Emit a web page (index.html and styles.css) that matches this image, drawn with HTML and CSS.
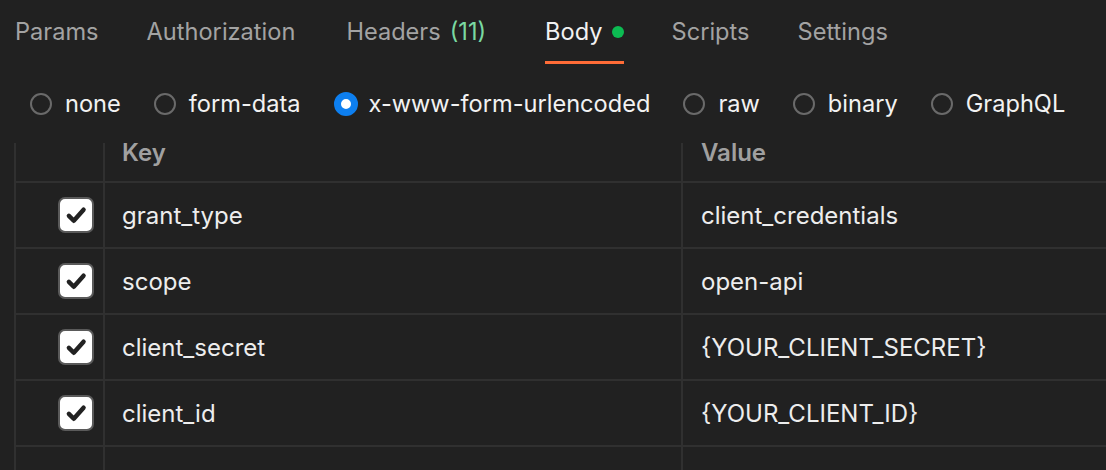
FILE: index.html
```html
<!DOCTYPE html>
<html>
<head>
<meta charset="utf-8">
<link rel="stylesheet" href="styles.css">
</head>
<body>
<div class="tabs">
  <div class="tab">Params</div>
  <div class="tab">Authorization</div>
  <div class="tab headers">Headers <span class="count">(11)</span></div>
  <div class="tab active">Body <span class="dot"></span></div>
  <div class="tab">Scripts</div>
  <div class="tab">Settings</div>
</div>
<div class="modes">
  <label class="mode"><span class="radio"></span>none</label>
  <label class="mode"><span class="radio"></span>form-data</label>
  <label class="mode"><span class="radio on"></span>x-www-form-urlencoded</label>
  <label class="mode"><span class="radio"></span>raw</label>
  <label class="mode"><span class="radio"></span>binary</label>
  <label class="mode"><span class="radio"></span>GraphQL</label>
</div>
<div class="table-wrap">
  <div class="table">
    <div class="row head">
      <div class="cell check"></div>
      <div class="cell key">Key</div>
      <div class="cell val">Value</div>
    </div>
    <div class="row">
      <div class="cell check"><span class="box"><svg viewBox="0 0 36 36"><path d="M10 19 L15.5 24.5 L26.5 12"/></svg></span></div>
      <div class="cell key">grant_type</div>
      <div class="cell val">client_credentials</div>
    </div>
    <div class="row">
      <div class="cell check"><span class="box"><svg viewBox="0 0 36 36"><path d="M10 19 L15.5 24.5 L26.5 12"/></svg></span></div>
      <div class="cell key">scope</div>
      <div class="cell val">open-api</div>
    </div>
    <div class="row">
      <div class="cell check"><span class="box"><svg viewBox="0 0 36 36"><path d="M10 19 L15.5 24.5 L26.5 12"/></svg></span></div>
      <div class="cell key">client_secret</div>
      <div class="cell val">{YOUR_CLIENT_SECRET}</div>
    </div>
    <div class="row">
      <div class="cell check"><span class="box"><svg viewBox="0 0 36 36"><path d="M10 19 L15.5 24.5 L26.5 12"/></svg></span></div>
      <div class="cell key">client_id</div>
      <div class="cell val">{YOUR_CLIENT_ID}</div>
    </div>
    <div class="row empty">
      <div class="cell check"></div>
      <div class="cell key">Key</div>
      <div class="cell val">Value</div>
    </div>
  </div>
</div>
</body>
</html>
```
FILE: styles.css
```css
html, body {
  margin: 0;
  padding: 0;
  background: #212121;
  height: 470px;
  overflow: hidden;
}
body {
  font-family: Inter, "Noto Sans", sans-serif;
  font-size: 23.6px;
  color: #ededed;
}
.tabs {
  display: flex;
  gap: 48px;
  padding-left: 15px;
  height: 64px;
}
.tab {
  display: flex;
  align-items: center;
  gap: 9px;
  color: #a3a3a3;
  box-sizing: border-box;
  height: 64px;
  padding-top: 2px;
  border-bottom: 3px solid transparent;
}
.tab.headers {
  margin-left: 3px;
}
.tab.active {
  color: #f2f2f2;
  border-bottom-color: #ff6c37;
  margin-left: 11px;
}
.count {
  color: #7ad9a2;
}
.dot {
  width: 12px;
  height: 12px;
  border-radius: 50%;
  background: #0cbb52;
}
.modes {
  display: flex;
  align-items: center;
  gap: 33px;
  padding-left: 30px;
  height: 79px;
}
.mode {
  display: flex;
  align-items: center;
  gap: 13px;
  color: #f2f2f2;
}
.radio {
  width: 22px;
  height: 22px;
  box-sizing: border-box;
  border: 2px solid #6a6a6a;
  border-radius: 50%;
}
.radio.on {
  width: 24px;
  height: 24px;
  border: 7px solid #0d7ff0;
  background: #fff;
  margin-right: -2px;
}
.table-wrap {
  margin-left: 14px;
  height: 327px;
  overflow: hidden;
}
.table {
  margin-top: -26px;
  border-left: 2px solid #303030;
}
.row {
  display: grid;
  grid-template-columns: 89px 578px 1fr;
  height: 66px;
  border-bottom: 2px solid #303030;
  box-sizing: border-box;
}
.cell {
  display: flex;
  align-items: center;
  font-size: 24px;
}
.cell.check, .cell.key {
  border-right: 2px solid #303030;
}
.cell.check {
  justify-content: flex-end;
  padding-right: 9px;
}
.cell.key {
  padding-left: 17px;
}
.cell.val {
  padding-left: 18px;
}
.head .cell {
  color: #a0a0a0;
  font-weight: 600;
  padding-top: 6px;
}
.empty .cell {
  color: #6b6b6b;
}
.box {
  width: 36px;
  height: 36px;
  box-sizing: border-box;
  border: 2px solid #5a5a5a;
  border-radius: 7px;
  background: #ffffff;
  display: block;
}
.box svg {
  display: block;
  width: 32px;
  height: 32px;
}
.box path {
  fill: none;
  stroke: #222;
  stroke-width: 5;
  stroke-linecap: round;
  stroke-linejoin: round;
}
```
